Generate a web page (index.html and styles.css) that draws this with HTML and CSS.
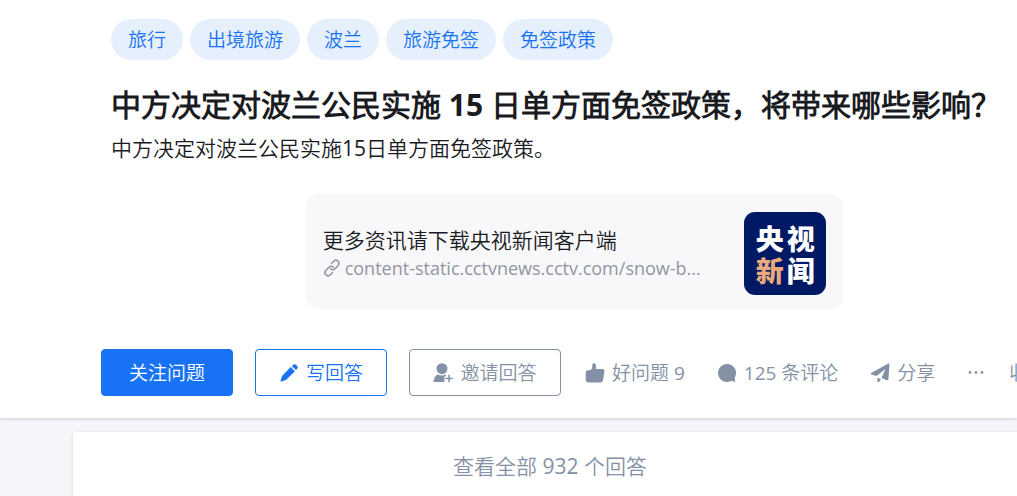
FILE: index.html
```html
<!DOCTYPE html>
<html lang="zh-CN">
<head>
    <meta charset="UTF-8">
    <meta name="viewport" content="width=device-width, initial-scale=1.0">
    <title>中方决定对波兰公民实施 15 日单方面免签政策，将带来哪些影响？</title>
    <link rel="stylesheet" href="styles.css">
</head>
<body>
    <header class="question">
        <div class="question-content">
            <nav class="tags">
                <a class="tag" href="#">旅行</a>
                <a class="tag" href="#">出境旅游</a>
                <a class="tag" href="#">波兰</a>
                <a class="tag" href="#">旅游免签</a>
                <a class="tag" href="#">免签政策</a>
            </nav>
            <h1 class="title">中方决定对波兰公民实施 15 日单方面免签政策，将带来哪些影响？</h1>
            <p class="detail">中方决定对波兰公民实施15日单方面免签政策。</p>
            <a class="link-card" href="#">
                <span class="link-text">
                    <span class="link-title">更多资讯请下载央视新闻客户端</span>
                    <span class="link-url">
                        <svg class="link-icon" viewBox="0 0 18 18" fill="none" stroke="currentColor" stroke-width="1.5" stroke-linecap="round">
                            <path d="M8.500 4.500 10.700 2.300a2.900 2.900 0 0 1 4.500 4.200l-3.200 3.200a2.900 2.900 0 0 1-4.300 0"/>
                            <path d="M9.500 13.500 7.300 15.700a2.900 2.900 0 0 1-4.500-4.200l3.200-3.200a2.900 2.900 0 0 1 4.300 0"/>
                        </svg>
                        content-static.cctvnews.cctv.com/snow-b...
                    </span>
                </span>
                <span class="cctv-logo">
                    <span>央</span><span>视</span>
                    <span class="gold">新</span><span>闻</span>
                </span>
            </a>
        </div>
        <!-- Acciones de la pregunta -->
        <div class="actions">
            <button class="btn btn-primary" type="button">关注问题</button>
            <button class="btn btn-write" type="button">
                <svg class="icon" viewBox="0 0 20 20" fill="currentColor">
                    <path d="M11.700 4.100 15.900 8.300 7 17 2.300 18.500Q1.300 18.800 1.600 17.700L3 13Z"/>
                    <path d="M12.900 3.100 14.300 1.700Q15.600.600 17 1.700L18.200 2.900Q19.400 4.300 18.200 5.700L16.900 7Z"/>
                </svg>
                写回答
            </button>
            <button class="btn btn-invite" type="button">
                <svg class="icon" viewBox="0 0 20 20" fill="currentColor">
                    <circle cx="9" cy="5.700" r="5.500"/>
                    <path d="M4.200 11.500Q9 13.600 13 11.500V13.200H11.400V18.700Q11.400 19 11 19H1.200Q.200 19 .400 18Q1.200 13.500 4.200 11.500Z"/>
                    <path d="M15.300 11.700h1.500v3h3v1.500h-3v3h-1.500v-3h-3v-1.500h3z"/>
                </svg>
                邀请回答
            </button>
            <button class="action" type="button">
                <svg class="icon" viewBox="0 0 20 20" fill="currentColor">
                    <path d="M5.800 7C7.300 5.500 7.300 3.500 7.300 1.900 7.300-.200 9.900-.400 10.700 1.400 11.300 3 10.900 4.500 10.600 6H17.200Q19.700 6 19.400 8.600L18.200 16.500Q17.800 19.500 15 19.500H3.600Q.700 19.500.700 16.600V10Q.700 7.300 3.300 7.300Z"/>
                </svg>
                好问题 9
            </button>
            <button class="action" type="button">
                <svg class="icon" viewBox="0 0 20 20" fill="currentColor">
                    <path d="M10 1A9 9 0 1 0 14.500 17.800L17.500 18.700Q18.400 18.900 18.200 18L17.600 14.900A9 9 0 0 0 10 1Z"/>
                </svg>
                125 条评论
            </button>
            <button class="action" type="button">
                <svg class="icon" viewBox="0 0 20 20" fill="currentColor">
                    <path d="M1.200 9.900 18.300.500Q19.600.100 19.500 1.400L18.400 16.200Q18.200 17.700 16.900 17.200L11.500 14.900 15.500 6 6.500 13 1.200 11.400Q.100 10.800 1.200 9.900Z"/>
                    <path d="M7.400 14.600 11 16.400 9 18.900Q7.500 20 7.400 18.200Z"/>
                </svg>
                分享
            </button>
            <button class="action more" type="button" aria-label="更多">
                <svg class="icon" viewBox="0 0 20 20" fill="currentColor">
                    <circle cx="3" cy="9.500" r="1.400"/>
                    <circle cx="9" cy="9.500" r="1.400"/>
                    <circle cx="15" cy="9.500" r="1.400"/>
                </svg>
            </button>
            <button class="action" type="button">收起</button>
        </div>
    </header>
    <main class="answers">
        <a class="view-all" href="#">查看全部 932 个回答</a>
    </main>
</body>
</html>
```
FILE: styles.css
```css
body {
    margin: 0;
    background-color: #f4f6fa;
    color: #191b1f;
    font-family: 'Open Sans', 'Noto Sans CJK SC DemiLight', 'Noto Sans CJK SC', sans-serif;
    overflow: hidden;
}

a {
    text-decoration: none;
}

.question {
    padding: 19px 0 22px 101px;
    background-color: white;
    box-shadow: 0 1px 4px rgba(0, 0, 0, 0.16);
}

.question-content {
    min-width: 927px;
    padding-left: 10px;
}

.tags {
    display: flex;
    gap: 7px;
}

.tag {
    padding: 2px 17px 0;
    border-radius: 21px;
    background-color: #e6f0fd;
    color: #1772f6;
    font-size: 19px;
    line-height: 39px;
}

.title {
    margin: 24px 0 0;
    font-size: 30px;
    line-height: 42px;
    font-weight: 700;
    white-space: nowrap;
}

.detail {
    margin: 6px 0 0;
    font-size: 21px;
    line-height: 32px;
}

/* Tarjeta del enlace */
.link-card {
    display: flex;
    align-items: center;
    justify-content: space-between;
    box-sizing: border-box;
    width: 58%;
    height: 115px;
    margin: 30px auto 0;
    padding: 4px 17px 0;
    border-radius: 12px;
    background-color: #f8f8fa;
}

.link-text {
    display: flex;
    flex-direction: column;
}

.link-title {
    color: #191b1f;
    font-size: 21px;
    line-height: 28px;
}

.link-url {
    display: flex;
    align-items: center;
    gap: 4px;
    color: #9196a1;
    font-size: 18px;
    line-height: 28px;
}

.link-icon {
    width: 18px;
    height: 18px;
}

.cctv-logo {
    display: grid;
    grid-template-columns: 31px 31px;
    align-content: center;
    justify-content: center;
    width: 82px;
    height: 83px;
    border-radius: 11px;
    background-color: #001965;
    color: white;
    font-family: 'Noto Sans CJK SC', sans-serif;
    font-size: 28px;
    font-weight: 900;
    line-height: 32px;
    text-align: center;
}

.gold {
    color: #e8aa7c;
}

.actions {
    display: flex;
    align-items: center;
    margin-top: 40px;
    white-space: nowrap;
}

.btn,
.action {
    display: flex;
    flex-shrink: 0;
    align-items: center;
    justify-content: center;
    gap: 7px;
    padding: 0;
    border: none;
    background: none;
    color: #8491a5;
    font-family: inherit;
    font-size: 19px;
    line-height: 28px;
}

.btn {
    box-sizing: border-box;
    width: 132px;
    height: 47px;
    margin-right: 22px;
    border: 1px solid #8491a5;
    border-radius: 4px;
}

.btn-primary {
    border-color: #1772f6;
    background-color: #1772f6;
    color: white;
}

.btn-write {
    border-color: #1772f6;
    color: #1772f6;
}

.btn-invite {
    width: 152px;
    margin-right: 24px;
}

.action {
    margin-right: 32px;
}

.more {
    margin-right: 22px;
}

.icon {
    width: 20px;
    height: 20px;
}

/* Lista de respuestas */
.answers {
    padding: 14px 0 0 73px;
}

.view-all {
    display: block;
    min-width: 954px;
    border-radius: 3px;
    background-color: white;
    box-shadow: 0 1px 4px rgba(0, 0, 0, 0.12);
    color: #8491a5;
    font-size: 21px;
    line-height: 68px;
    text-align: center;
}
```
